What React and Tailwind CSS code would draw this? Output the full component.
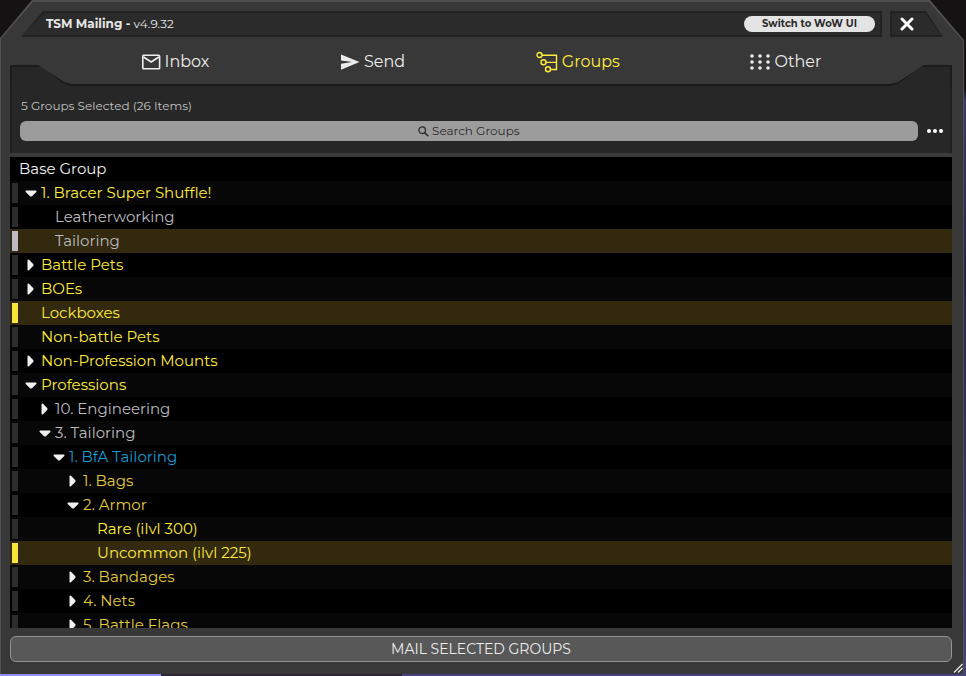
import React from "react";

const INDENT = {
  1: "pl-[3px]",
  2: "pl-[17px]",
  3: "pl-[31px]",
  4: "pl-[45px]",
  5: "pl-[59px]",
};

const TONE = {
  yellow: "text-[#ffec3d]",
  gray: "text-[#bcbcc0]",
  blue: "text-[#159cd6]",
  gold: "text-[#e4ca3e]",
};

const GROUPS = [
  { name: "1. Bracer Super Shuffle!", depth: 1, tone: "yellow", arrow: "down" },
  { name: "Leatherworking", depth: 2, tone: "gray" },
  { name: "Tailoring", depth: 2, tone: "gray", selected: true },
  { name: "Battle Pets", depth: 1, tone: "yellow", arrow: "right" },
  { name: "BOEs", depth: 1, tone: "yellow", arrow: "right" },
  { name: "Lockboxes", depth: 1, tone: "yellow", selected: true },
  { name: "Non-battle Pets", depth: 1, tone: "yellow" },
  { name: "Non-Profession Mounts", depth: 1, tone: "yellow", arrow: "right" },
  { name: "Professions", depth: 1, tone: "yellow", arrow: "down" },
  { name: "10. Engineering", depth: 2, tone: "gray", arrow: "right" },
  { name: "3. Tailoring", depth: 2, tone: "gray", arrow: "down" },
  { name: "1. BfA Tailoring", depth: 3, tone: "blue", arrow: "down" },
  { name: "1. Bags", depth: 4, tone: "gold", arrow: "right" },
  { name: "2. Armor", depth: 4, tone: "gold", arrow: "down" },
  { name: "Rare (ilvl 300)", depth: 5, tone: "yellow" },
  { name: "Uncommon (ilvl 225)", depth: 5, tone: "yellow", selected: true },
  { name: "3. Bandages", depth: 4, tone: "gold", arrow: "right" },
  { name: "4. Nets", depth: 4, tone: "gold", arrow: "right" },
  { name: "5. Battle Flags", depth: 4, tone: "gold", arrow: "right" },
];

function Arrow({ dir }) {
  if (dir === "down") {
    return (
      <svg width="12" height="7" viewBox="0 0 12 7" fill="#f0f0f0" aria-hidden="true">
        <path d="M1 0.5h10q1 0.6 0.3 1.5L7 6.2q-1 0.7-2 0L0.7 2Q0 1.1 1 0.5z" />
      </svg>
    );
  }
  return (
    <svg width="8" height="12" viewBox="0 0 8 12" fill="#f0f0f0" aria-hidden="true">
      <path d="M0.5 1q0.6-1 1.5-0.3L6.2 5q0.7 1 0 2L2 11.3q-0.9 0.7-1.5-0.3z" />
    </svg>
  );
}

function InboxIcon() {
  return (
    <svg width="20" height="20" viewBox="0 0 20 20" fill="none" stroke="currentColor" aria-hidden="true">
      <rect x="1.8" y="3.3" width="16.8" height="13.4" rx="0.8" strokeWidth="1.6" />
      <path d="M2.5 5l7.7 5 7.7-5" strokeWidth="1.8" />
    </svg>
  );
}

function SendIcon() {
  return (
    <svg width="20" height="20" viewBox="0 0 20 20" fill="currentColor" aria-hidden="true">
      <path d="M1 2.5L19.5 10 1 17.8v-6L12 10 1 8.5z" />
    </svg>
  );
}

function GroupsIcon() {
  return (
    <svg width="22" height="22" viewBox="0 0 22 22" fill="none" stroke="currentColor" strokeWidth="1.4" aria-hidden="true">
      <circle cx="3.5" cy="4" r="2.5" />
      <circle cx="7.5" cy="11.3" r="2.5" />
      <circle cx="12" cy="18.3" r="2.5" />
      <path d="M6 4.2h14.5v14.3h-5.8M10 11.4h10.5" />
    </svg>
  );
}

function GridIcon() {
  return (
    <svg width="20" height="20" viewBox="0 0 20 20" fill="currentColor" aria-hidden="true">
      {[4, 10, 16].map((y) =>
        [2, 10, 18].map((x) => <circle key={`${x}-${y}`} cx={x} cy={y} r="1.8" />)
      )}
    </svg>
  );
}

const TABS = [
  { name: "Inbox", icon: InboxIcon },
  { name: "Send", icon: SendIcon },
  { name: "Groups", icon: GroupsIcon, active: true },
  { name: "Other", icon: GridIcon },
];

function TitleBar() {
  return (
    <header className="flex h-[38px] shrink-0 items-end gap-2 pr-5 pb-[1px] pl-5">
      <div className="flex h-[26px] flex-1 bg-[#222222] [clip-path:polygon(22px_0,100%_0,100%_100%,0_100%)]">
        <div className="m-[2px] flex flex-1 items-center justify-between bg-[#2b2b2b] pr-[5px] pl-[23px] [clip-path:polygon(21px_0,100%_0,100%_100%,0_100%)]">
          <h1 className="text-xs text-[#e6e6e6]">
            <span className="font-bold">TSM Mailing -</span> v4.9.32
          </h1>
          <button className="h-4 w-[131px] rounded-full bg-[#e4e4e4] text-[10px] leading-4 font-bold text-[#2b2b2b]">
            Switch to WoW UI
          </button>
        </div>
      </div>
      <div className="flex h-[26px] w-[53px] bg-[#222222] [clip-path:polygon(0_0,36px_0,100%_100%,0_100%)]">
        <button
          aria-label="Close"
          className="m-[2px] flex flex-1 items-center bg-[#2b2b2b] pl-2 text-white [clip-path:polygon(0_0,33px_0,100%_100%,0_100%)]"
        >
          <svg width="14" height="14" viewBox="0 0 14 14" stroke="currentColor" strokeWidth="3" strokeLinecap="round" aria-hidden="true">
            <path d="M2 2l10 10M12 2L2 12" />
          </svg>
        </button>
      </div>
    </header>
  );
}

function Tabs() {
  return (
    <nav className="relative h-12 shrink-0">
      <div className="absolute inset-x-0 bottom-0 h-[21px] border-x-2 border-t-2 border-[#1c1c1c] bg-[#272727]" />
      <div className="absolute inset-x-0 bottom-0 h-[21px] bg-[#1a1a1a] [clip-path:polygon(28px_0,calc(100%-28px)_0,calc(100%-33px)_3px,calc(100%-54px)_19px,calc(100%-62px)_100%,62px_100%,54px_19px,33px_3px)]" />
      <div className="absolute inset-x-0 bottom-[2px] h-[19px] bg-[#383838] [clip-path:polygon(28px_0,calc(100%-28px)_0,calc(100%-54px)_17px,calc(100%-62px)_100%,62px_100%,54px_17px)]" />
      <div className="relative flex h-12 items-center justify-evenly">
        {TABS.map(({ name, icon: Icon, active }) => (
          <button
            key={name}
            className={`flex h-6 items-center gap-1 text-base ${active ? "text-[#ffec3d]" : "text-[#ececec]"}`}
          >
            <Icon />
            {name}
          </button>
        ))}
      </div>
    </nav>
  );
}

function SearchRow() {
  return (
    <div className="flex items-center gap-[9px] pr-[7px] pl-2">
      <label className="flex h-5 flex-1 items-center justify-center gap-[3px] rounded-md bg-[#9c9c9c] text-[#2b2b2b]">
        <svg width="11" height="11" viewBox="0 0 11 11" fill="none" stroke="currentColor" strokeWidth="1.3" aria-hidden="true">
          <circle cx="4.2" cy="4.2" r="3.3" />
          <path d="M6.7 6.7l3.6 3.6" strokeWidth="1.6" />
        </svg>
        <input
          type="text"
          aria-label="Search Groups"
          placeholder="Search Groups"
          className="w-[88px] bg-transparent text-xs outline-none placeholder:text-[#2b2b2b]"
        />
      </label>
      <button aria-label="More options" className="flex gap-[2px]">
        <span className="size-1 rounded-full bg-white" />
        <span className="size-1 rounded-full bg-white" />
        <span className="size-1 rounded-full bg-white" />
      </button>
    </div>
  );
}

function GroupRow({ group }) {
  const { name, depth, tone, arrow, selected } = group;
  const marker = selected ? (tone === "gray" ? "bg-[#bcbac4]" : "bg-[#f8e53a]") : "bg-[#2c2c2c]";
  return (
    <li className={selected ? "bg-[#32290f]" : "odd:bg-black even:bg-[#070707]"}>
      <button className="flex h-6 w-full items-center pl-[2px] text-left">
        <span className={`h-5 w-[6px] ${marker}`} />
        <span className={`flex items-center ${INDENT[depth]} ${TONE[tone]}`}>
          <span className="flex w-5 justify-center">{arrow && <Arrow dir={arrow} />}</span>
          <span className="leading-6">{name}</span>
        </span>
      </button>
    </li>
  );
}

export default function App() {
  return (
    <div className="flex h-screen flex-col bg-[linear-gradient(180deg,#151214_0%,#151214_13%,#3c3a68_15%,#25243f_40%,#45417c_100%)] font-['Montserrat','Inter',sans-serif]">
      <div className="mr-[2px] flex min-h-0 flex-1 flex-col bg-[#505050] [clip-path:polygon(32px_0,calc(100%-34px)_0,100%_40px,100%_100%,0_100%,0_38px)]">
        <main className="relative mx-[1px] mt-[2px] -mb-[2px] flex min-h-0 flex-1 flex-col bg-[#383838] pb-[14px] [clip-path:polygon(32px_0,calc(100%-34px)_0,100%_39px,100%_100%,0_100%,0_37px)]">
          <div className="-mt-[2px] flex min-h-0 flex-1 flex-col">
            <TitleBar />
            <div className="mr-[11px] ml-[9px] flex min-h-0 flex-1 flex-col">
              <Tabs />
              <section className="border-x-2 border-[#1f1f1f] bg-[#272727] pt-3 pb-3">
                <p className="mb-[7px] pl-[9px] text-xs leading-4 text-[#c2c2c2]">5 Groups Selected (26 Items)</p>
                <SearchRow />
              </section>
              <ul className="min-h-0 flex-1 overflow-hidden border-t-4 border-[#3a3a3a] bg-black text-[15px]">
                <li className="flex h-6 items-center pl-[9px] leading-6 text-[#f2f2f2]">Base Group</li>
                {GROUPS.map((group) => (
                  <GroupRow key={group.name} group={group} />
                ))}
              </ul>
              <button className="mt-2 h-[26px] shrink-0 rounded-md border border-[#939393] bg-[#585858] text-sm leading-6 text-[#ececec]">
                MAIL SELECTED GROUPS
              </button>
            </div>
          </div>
          <svg className="absolute right-0 bottom-[3px]" width="10" height="10" viewBox="0 0 10 10" stroke="#e8e8e8" strokeWidth="1.3" aria-hidden="true">
            <path d="M1 9.5L9.5 1M5 9.5L9.5 5" />
          </svg>
        </main>
      </div>
      <div className="flex h-[2px] shrink-0">
        <div className="w-1/6 bg-[#8f90fa]" />
        <div className="w-1/4 bg-[#2b2535]" />
        <div className="flex-1 bg-[#45417c]" />
      </div>
    </div>
  );
}
